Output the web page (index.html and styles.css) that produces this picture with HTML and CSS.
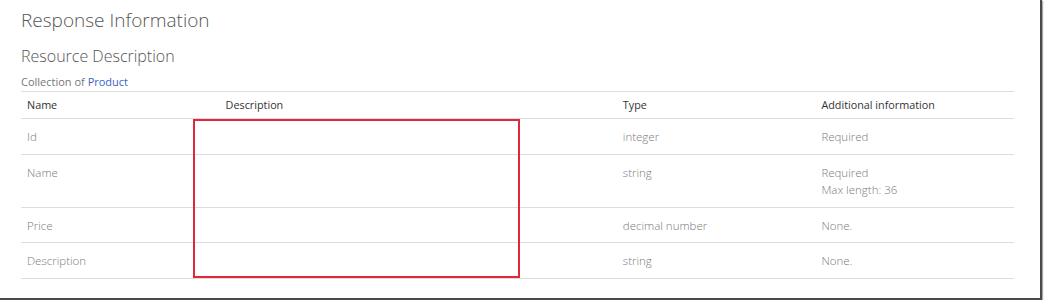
FILE: index.html
```html
<!DOCTYPE html>
<html lang="en">
<head>
  <meta charset="UTF-8" />
  <title>Response Information</title>
  <link rel="stylesheet" href="styles.css">
</head>
<body>
  <div class="frame">
    <div class="content">
      <h2>Response Information</h2>
      <h3>Resource Description</h3>
      <p class="collection">Collection of <a href="#">Product</a></p>

      <table class="help-table">
        <thead>
          <tr>
            <th class="col-name">Name</th>
            <th class="col-desc">Description</th>
            <th class="col-type">Type</th>
            <th class="col-info">Additional information</th>
          </tr>
        </thead>
        <tbody>
          <tr>
            <td>Id</td>
            <td></td>
            <td>integer</td>
            <td>Required</td>
          </tr>
          <tr>
            <td>Name</td>
            <td></td>
            <td>string</td>
            <td>Required<br>Max length: 36</td>
          </tr>
          <tr>
            <td>Price</td>
            <td></td>
            <td>decimal number</td>
            <td>None.</td>
          </tr>
          <tr>
            <td>Description</td>
            <td></td>
            <td>string</td>
            <td>None.</td>
          </tr>
        </tbody>
      </table>
    </div>

    <!-- marca sobre la columna de descripción -->
    <div class="highlight"></div>
  </div>
</body>
</html>
```

FILE: styles.css
```css
html,
body {
  margin: 0;
  padding: 0;
  background-color: #fff;
}

body {
  font-family: "Segoe UI", "Open Sans", Arial, sans-serif;
  color: #333;
}

.frame {
  position: relative;
  width: 1040px;
  height: 298px;
  background-color: #fff;
  border-right: 2px solid #4a4a4a;
  border-bottom: 2px solid #4a4a4a;
  box-shadow: 1px 1px 1px #aaa;
  overflow: hidden;
}

.content {
  padding: 7px 26px 0 21px;
}

h2 {
  margin: 0;
  font-size: 19px;
  font-weight: 300;
  line-height: 26px;
  color: #555;
}

h3 {
  margin: 12px 0 0;
  font-size: 16px;
  font-weight: 300;
  line-height: 22px;
  color: #555;
}

.collection {
  margin: 7px 0 0;
  font-size: 11px;
  line-height: 15px;
  color: #777;
}

.collection a {
  color: #3a5fcd;
  text-decoration: none;
}

.help-table {
  width: 993px;
  margin-top: 2px;
  border-collapse: collapse;
  table-layout: fixed;
  font-size: 11.5px;
  line-height: 17.5px;
}

.help-table th,
.help-table td {
  box-sizing: border-box;
  text-align: left;
  vertical-align: top;
  border-top: 1px solid #ddd;
  padding: 9px 6px 8px;
}

.help-table th {
  font-size: 10.8px;
  font-weight: 400;
  line-height: 17px;
  color: #333;
  padding: 4px 6px 5px;
}

.help-table td {
  color: #7a7a7a;
  font-weight: 300;
}

.help-table tbody tr:last-child td {
  border-bottom: 1px solid #ddd;
}

.col-name { width: 20%; }
.col-desc { width: 40%; }
.col-type { width: 20%; }
.col-info { width: 20%; }

.highlight {
  position: absolute;
  left: 193px;
  top: 119px;
  width: 323px;
  height: 155px;
  border: 2px solid #e0283a;
}
```
